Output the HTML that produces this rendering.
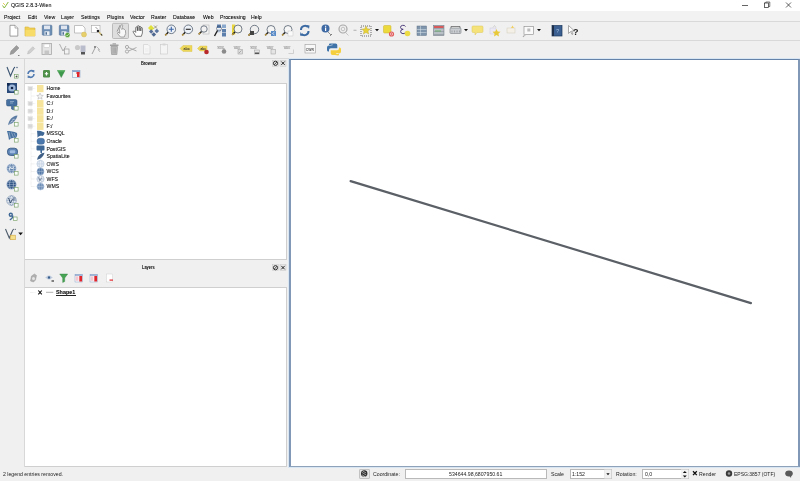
<!DOCTYPE html><html><head><meta charset="utf-8"><style>
*{margin:0;padding:0;box-sizing:border-box}
html,body{width:800px;height:481px;overflow:hidden;background:#f0f0f0;font-family:"Liberation Sans",sans-serif;font-size:5.2px;color:#1a1a1a}
.a{position:absolute}
.t{position:absolute;white-space:nowrap;line-height:1;-webkit-text-stroke:0.06px currentColor}
body{-webkit-font-smoothing:antialiased}
svg{position:absolute;left:0;top:0}
</style></head><body><div style="position:absolute;left:0;top:0;width:800px;height:481px;will-change:transform">
<div class="a" style="left:0px;top:0px;width:800px;height:11px;background:#ffffff;"></div>
<div class="a" style="left:0px;top:11px;width:800px;height:10px;background:#f2f2f2;"></div>
<div class="a" style="left:0px;top:21px;width:800px;height:1px;background:#d9d9d9;"></div>
<div class="a" style="left:0px;top:40px;width:800px;height:1px;background:#d9d9d9;"></div>
<div class="a" style="left:289px;top:59px;width:511px;height:408px;background:#fff;border:2px solid #8199b6;border-top:1.5px solid #6582a8;border-bottom:1.5px solid #8ea3ba;box-shadow:0 0 0 1px #d8e6f4"></div>
<div class="a" style="left:0px;top:58px;width:289px;height:1px;background:#d9d9d9;"></div>
<div class="a" style="left:24px;top:83px;width:263px;height:177px;background:#fff;border:1px solid #cfcfcf"></div>
<div class="a" style="left:24px;top:287px;width:263px;height:179.5px;background:#fff;border:1px solid #cfcfcf"></div>
<div class="a" style="left:24px;top:59px;width:1px;height:408px;background:#d8d8d8;"></div>
<div class="t" style="left:11px;top:3.4px;font-size:5.3px;color:#000;">QGIS 2.8.3-Wien</div>
<div class="t" style="left:4px;top:14.5px;font-size:5.2px;color:#000;">Project</div>
<div class="t" style="left:28px;top:14.5px;font-size:5.2px;color:#000;">Edit</div>
<div class="t" style="left:44px;top:14.5px;font-size:5.2px;color:#000;">View</div>
<div class="t" style="left:61px;top:14.5px;font-size:5.2px;color:#000;">Layer</div>
<div class="t" style="left:81px;top:14.5px;font-size:5.2px;color:#000;">Settings</div>
<div class="t" style="left:107px;top:14.5px;font-size:5.2px;color:#000;">Plugins</div>
<div class="t" style="left:130px;top:14.5px;font-size:5.2px;color:#000;">Vector</div>
<div class="t" style="left:151px;top:14.5px;font-size:5.2px;color:#000;">Raster</div>
<div class="t" style="left:173px;top:14.5px;font-size:5.2px;color:#000;">Database</div>
<div class="t" style="left:203px;top:14.5px;font-size:5.2px;color:#000;">Web</div>
<div class="t" style="left:220px;top:14.5px;font-size:5.2px;color:#000;">Processing</div>
<div class="t" style="left:251px;top:14.5px;font-size:5.2px;color:#000;">Help</div>
<div class="t" style="left:140.5px;top:61.6px;font-size:4.6px;color:#111;font-weight:bold;transform:scaleX(0.85);transform-origin:left">Browser</div>
<div class="t" style="left:142px;top:265.6px;font-size:4.6px;color:#111;font-weight:bold;transform:scaleX(0.85);transform-origin:left">Layers</div>
<div class="t" style="left:46.5px;top:86.2px;font-size:5.2px;color:#000;">Home</div>
<div class="t" style="left:46.5px;top:93.74000000000001px;font-size:5.2px;color:#000;">Favourites</div>
<div class="t" style="left:46.5px;top:101.28px;font-size:5.2px;color:#000;">C:/</div>
<div class="t" style="left:46.5px;top:108.82000000000001px;font-size:5.2px;color:#000;">D:/</div>
<div class="t" style="left:46.5px;top:116.36px;font-size:5.2px;color:#000;">E:/</div>
<div class="t" style="left:46.5px;top:123.9px;font-size:5.2px;color:#000;">F:/</div>
<div class="t" style="left:46.5px;top:131.44px;font-size:5.2px;color:#000;">MSSQL</div>
<div class="t" style="left:46.5px;top:138.98px;font-size:5.2px;color:#000;">Oracle</div>
<div class="t" style="left:46.5px;top:146.51999999999998px;font-size:5.2px;color:#000;">PostGIS</div>
<div class="t" style="left:46.5px;top:154.06px;font-size:5.2px;color:#000;">SpatiaLite</div>
<div class="t" style="left:46.5px;top:161.6px;font-size:5.2px;color:#000;">OWS</div>
<div class="t" style="left:46.5px;top:169.14px;font-size:5.2px;color:#000;">WCS</div>
<div class="t" style="left:46.5px;top:176.68px;font-size:5.2px;color:#000;">WFS</div>
<div class="t" style="left:46.5px;top:184.21999999999997px;font-size:5.2px;color:#000;">WMS</div>
<div class="t" style="left:56px;top:290px;font-size:5.4px;color:#000;font-weight:bold">Shape1</div>
<div class="a" style="left:56px;top:294.8px;width:19.8px;height:0.7px;background:#222;"></div>
<div class="t" style="left:3px;top:471.6px;font-size:5.2px;color:#222;-webkit-text-stroke:0">2 legend entries removed.</div>
<div class="a" style="left:405px;top:469px;width:142px;height:10px;background:#fff;border:1px solid #b9b9b9"></div>
<div class="a" style="left:570px;top:469px;width:42px;height:10px;background:#fff;border:1px solid #b9b9b9"></div>
<div class="a" style="left:642px;top:469px;width:47px;height:10px;background:#fff;border:1px solid #b9b9b9"></div>
<div class="a" style="left:359px;top:468.5px;width:10.5px;height:10px;background:#e6e6e6;border:1px solid #c2c2c2;border-radius:1px"></div>
<div class="t" style="left:373px;top:471.6px;font-size:5.2px;color:#222;-webkit-text-stroke:0">Coordinate:</div>
<div class="t" style="left:449px;top:471.6px;font-size:5.2px;color:#222;-webkit-text-stroke:0">534644.98,6807950.61</div>
<div class="t" style="left:551px;top:471.6px;font-size:5.2px;color:#222;-webkit-text-stroke:0">Scale</div>
<div class="t" style="left:572px;top:471.6px;font-size:5.2px;color:#222;-webkit-text-stroke:0">1:152</div>
<div class="t" style="left:616px;top:471.6px;font-size:5.2px;color:#222;-webkit-text-stroke:0">Rotation:</div>
<div class="t" style="left:645px;top:471.6px;font-size:5.2px;color:#222;-webkit-text-stroke:0">0,0</div>
<div class="t" style="left:699px;top:471.6px;font-size:5.2px;color:#222;-webkit-text-stroke:0">Render</div>
<div class="t" style="left:734px;top:471.6px;font-size:5.0px;color:#222;-webkit-text-stroke:0">EPSG:3857 (OTF)</div>
<svg width="800" height="481" viewBox="0 0 800 481"><line x1="350.6" y1="181.1" x2="750.9" y2="303.1" stroke="#5b6067" stroke-width="2.2" stroke-linecap="round"/><path d="M2.5,5.5 L4.3,8 L8.3,2" fill="none" stroke="#86b83e" stroke-width="1.0"/><path d="M3,3 L5,5" stroke="#e0c030" stroke-width="0.8"/><line x1="742" y1="5.5" x2="748" y2="5.5" stroke="#222" stroke-width="0.7"/><rect x="764.5" y="3" width="4" height="4.5" fill="none" stroke="#222" stroke-width="0.7"/><path d="M765.8,3 v-1 h4 v4.5 h-1" fill="none" stroke="#222" stroke-width="0.6"/><path d="M786,2.5 L791,7.5 M791,2.5 L786,7.5" stroke="#222" stroke-width="0.7"/><path d="M10,25.3 h5 l2.8,2.8 v8 h-7.8 z" fill="#fff" stroke="#8a8a8a" stroke-width="0.8"/><path d="M15,25.3 v2.8 h2.8" fill="#eee" stroke="#8a8a8a" stroke-width="0.6"/><path d="M25,27 h3.5 l1,1 h5.5 v8 h-10 z" fill="#f0cf55" stroke="#d9b43a" stroke-width="0.6"/><rect x="25.5" y="30" width="9.5" height="6" fill="#f7dc6a"/><rect x="42.3" y="25.2" width="9.6" height="10" rx="0.8" fill="#6e8fb5" stroke="#4f6e94" stroke-width="0.6"/><rect x="44" y="25.6" width="6" height="3.6" fill="#dfe6ef"/><rect x="44.5" y="31.3" width="5" height="3.9" fill="#e9eef4"/><rect x="45.5" y="32.2" width="1.5" height="2.5" fill="#4f6e94"/><rect x="59.3" y="25.2" width="9.6" height="10" rx="0.8" fill="#6e8fb5" stroke="#4f6e94" stroke-width="0.6"/><rect x="61" y="25.6" width="6" height="3.6" fill="#dfe6ef"/><rect x="61.5" y="31.3" width="5" height="3.9" fill="#e9eef4"/><rect x="62.5" y="32.2" width="1.5" height="2.5" fill="#4f6e94"/><circle cx="67.5" cy="35" r="2.6" fill="#5aa33c" stroke="#fff" stroke-width="0.5"/><path d="M66.3,35 l0.9,0.9 l1.6,-1.8" stroke="#fff" stroke-width="0.6" fill="none"/><path d="M74.5,25.5 h8 l2.5,2.5 v5 h-10.5 z" fill="#fff" stroke="#a9a9a9" stroke-width="0.7"/><circle cx="84" cy="34.5" r="2.5" fill="#e7d06c" stroke="#cfb24a" stroke-width="0.4"/><rect x="91.5" y="25.5" width="8.5" height="7" fill="#fff" stroke="#a5a5a5" stroke-width="0.6"/><path d="M95.5,27 l2,2" stroke="#555" stroke-width="0.6"/><circle cx="98" cy="31" r="1.3" fill="#222"/><path d="M99,32 l3,3.5" stroke="#c9b870" stroke-width="1.3"/><path d="M101,34 l1.2,1.5" stroke="#333" stroke-width="1.1"/><rect x="112.5" y="23.3" width="16" height="15.2" rx="1" fill="#dedede" stroke="#a8a8a8" stroke-width="0.7"/><path d="M120.5,37 l-3,-3.5 l0.5,-1.2 l1.8,1 l-0.3,-4 l1.8,-4.5 a0.8,0.8 0 0 1 1.4,0.6 l-1,4 l1.2,-0.8 l1.3,0.6 l1.2,1.2 l0.3,3 l-1.5,3.6 z" fill="#f7f7f7" stroke="#7d7d7d" stroke-width="0.65"/><path d="M117,31.5 l3.2,-6.5" stroke="#8a8a8a" stroke-width="0.8"/><path d="M135.8,36.3 l-2.6,-4.2 a0.8,0.8 0 0 1 1.3,-0.9 l1.2,1.2 v-4.6 a0.85,0.85 0 0 1 1.7,0 v3 v-4.3 a0.85,0.85 0 0 1 1.7,0 v4.3 v-3.6 a0.85,0.85 0 0 1 1.7,0 v3.8 v-2.6 a0.8,0.8 0 0 1 1.6,0 v4.6 l-1.1,3.3 z" fill="#fff" stroke="#2a2a2a" stroke-width="0.6"/><path d="M148,28 l3,-3 l3.2,3.2 l-3,3 z" fill="#dfe03a"/><path d="M154,25.5 l1.5,1.5 l1.5,-1.5 M154,28.5 l1.5,-1.5 l1.5,1.5" stroke="#6b6a3a" stroke-width="0.6" fill="none"/><path d="M149,31.5 l2.2,-2.2 l2.2,2.2 l-2.2,2.2 z" fill="#5a6f98"/><path d="M154.5,31 l2.3,-2.3 l2.3,2.3 l-2.3,2.3 z" fill="#5a74a0"/><path d="M151.5,34.5 l2.3,-2.3 l2.3,2.3 l-2.3,2.3 z" fill="#4f6890"/><line x1="168.29000000000002" y1="32.31" x2="165.29000000000002" y2="35.31" stroke="#1e1e1e" stroke-width="1.5"/><line x1="166.79000000000002" y1="33.81" x2="165.09000000000003" y2="35.510000000000005" stroke="#c8a040" stroke-width="1.1"/><circle cx="171.3" cy="29.3" r="4.3" fill="#eef3fa" stroke="#3d4a5c" stroke-width="0.7"/><path d="M168.8,29.3 h5 M171.3,26.8 v5" stroke="#3b64a4" stroke-width="1.1"/><line x1="185.29000000000002" y1="32.31" x2="182.29000000000002" y2="35.31" stroke="#1e1e1e" stroke-width="1.5"/><line x1="183.79000000000002" y1="33.81" x2="182.09000000000003" y2="35.510000000000005" stroke="#c8a040" stroke-width="1.1"/><circle cx="188.3" cy="29.3" r="4.3" fill="#eef3fa" stroke="#3d4a5c" stroke-width="0.7"/><path d="M185.8,29.3 h5" stroke="#333" stroke-width="1.2"/><rect x="203" y="25" width="6" height="9" fill="#f4f4f4" stroke="#b5b5b5" stroke-width="0.6"/><line x1="201.76" y1="31.24" x2="198.76" y2="34.239999999999995" stroke="#1e1e1e" stroke-width="1.5"/><line x1="200.26" y1="32.739999999999995" x2="198.56" y2="34.44" stroke="#c8a040" stroke-width="1.1"/><circle cx="204" cy="29" r="3.2" fill="#f2f2f2" stroke="#3d4a5c" stroke-width="0.7"/><rect x="217" y="24.5" width="4" height="3.5" fill="#5d7fab"/><rect x="222" y="24.5" width="4" height="3.5" fill="#8aa7cc"/><rect x="222" y="29" width="4" height="3.5" fill="#5d7fab"/><rect x="217" y="29" width="4" height="3.5" fill="#c8d6e8"/><rect x="222" y="33" width="4" height="3.5" fill="#5d7fab"/><circle cx="219" cy="28.5" r="2.5" fill="none" stroke="#2b3b55" stroke-width="0.5"/><line x1="217.5" y1="30.5" x2="214.5" y2="36" stroke="#1e1e1e" stroke-width="1.4"/><rect x="232" y="24.5" width="3.2" height="10" fill="#e8d63c"/><line x1="235.2" y1="31.8" x2="232.2" y2="34.8" stroke="#1e1e1e" stroke-width="1.5"/><line x1="233.7" y1="33.3" x2="232.0" y2="35.0" stroke="#c8a040" stroke-width="1.1"/><circle cx="238" cy="29" r="4" fill="#f5f5ee" stroke="#3d4a5c" stroke-width="0.7"/><line x1="251.56" y1="32.44" x2="248.56" y2="35.44" stroke="#1e1e1e" stroke-width="1.5"/><line x1="250.06" y1="33.94" x2="248.36" y2="35.64" stroke="#c8a040" stroke-width="1.1"/><circle cx="254.5" cy="29.5" r="4.2" fill="#efefef" stroke="#3d4a5c" stroke-width="0.7"/><rect x="250" y="31" width="4" height="4" fill="#444"/><line x1="268.2" y1="32.3" x2="265.2" y2="35.3" stroke="#1e1e1e" stroke-width="1.5"/><line x1="266.7" y1="33.8" x2="265.0" y2="35.5" stroke="#c8a040" stroke-width="1.1"/><circle cx="271" cy="29.5" r="4" fill="#f5f5f5" stroke="#3d4a5c" stroke-width="0.7"/><rect x="271" y="31" width="5" height="5" fill="#5b8cc7"/><path d="M274.5,32 l-2,1.5 l2,1.5" stroke="#fff" stroke-width="0.6" fill="none"/><line x1="285.2" y1="32.3" x2="282.2" y2="35.3" stroke="#1e1e1e" stroke-width="1.5"/><line x1="283.7" y1="33.8" x2="282.0" y2="35.5" stroke="#c8a040" stroke-width="1.1"/><circle cx="288" cy="29.5" r="4" fill="#f7f7f7" stroke="#3d4a5c" stroke-width="0.7"/><rect x="288" y="31" width="5" height="5" fill="#fafafa" stroke="#c5c5c5" stroke-width="0.5"/><path d="M301,30 a4,4 0 0 1 7,-2.8" fill="none" stroke="#3b6aa2" stroke-width="2"/><path d="M306.5,25 l3,0.5 l-0.5,3.5 z" fill="#3b6aa2"/><path d="M308.5,31 a4,4 0 0 1 -7,2.8" fill="none" stroke="#3b6aa2" stroke-width="2"/><path d="M303,36 l-3,-0.5 l0.5,-3.5 z" fill="#3b6aa2"/><circle cx="325.5" cy="28.5" r="4" fill="#3f6aa3"/><rect x="325" y="27.5" width="1.2" height="3.5" fill="#fff"/><rect x="325" y="25.8" width="1.2" height="1" fill="#fff"/><path d="M328,32 l3,3 l1,-1 M330,36 l2,-2" stroke="#777" stroke-width="0.8" fill="none"/><circle cx="343" cy="29" r="4" fill="none" stroke="#a8a8a8" stroke-width="1.2"/><circle cx="343" cy="29" r="1.8" fill="none" stroke="#b5b5b5" stroke-width="0.8"/><path d="M346,33 l2.5,2.5" stroke="#bbb" stroke-width="0.8"/><rect x="353.5" y="29.8" width="3" height="0.8" fill="#a0a0a0"/><path d="M361,26 h10 v10 h-10 z" fill="none" stroke="#333" stroke-width="0.7" stroke-dasharray="1,1"/><path d="M366,26 l1.3,2.8 l3,0.3 l-2.3,2 l0.7,3 l-2.7,-1.6 l-2.7,1.6 l0.7,-3 l-2.3,-2 l3,-0.3 z" fill="#e8d23a" stroke="#a28e1c" stroke-width="0.3"/><path d="M375,29 h4 l-2,2.2 z" fill="#111"/><rect x="383.5" y="25.5" width="7.5" height="7.5" rx="1" fill="#ecd93c" stroke="#c9b22a" stroke-width="0.5"/><circle cx="391.5" cy="34" r="2.6" fill="#e25b5b"/><circle cx="391.5" cy="34" r="1.2" fill="none" stroke="#fff" stroke-width="0.5"/><path d="M405.5,26.5 a2.6,2 0 1 0 -2.3,2.8 a2.6,2.2 0 1 0 2.6,2.6" fill="none" stroke="#4b3a7a" stroke-width="1"/><circle cx="407.5" cy="33.5" r="2.8" fill="#ecdb45"/><rect x="417" y="26" width="9.5" height="9.5" fill="#7f95ab" stroke="#607589" stroke-width="0.5"/><path d="M417,29.5 h9.5 M417,32.5 h9.5 M420.5,26 v9.5" stroke="#dfe6ee" stroke-width="0.5"/><rect x="433.5" y="25.5" width="10.5" height="10" fill="#9aa3ab" stroke="#6e7780" stroke-width="0.5"/><rect x="434" y="26" width="9.5" height="2" fill="#d65a5a"/><path d="M434,30 h9.5 M434,33 h9.5" stroke="#e8ecef" stroke-width="0.8"/><rect x="435" y="30.5" width="6" height="1" fill="#6cae6c"/><rect x="450" y="28" width="11" height="5.5" rx="1" fill="#c9cdd2" stroke="#777d85" stroke-width="0.6"/><path d="M451,28 v-1.5 h9 v1.5" stroke="#555" stroke-width="0.7" fill="none"/><path d="M452,30.5 v2 M454.5,30.5 v2 M457,30.5 v2 M459.5,30.5 v2" stroke="#666" stroke-width="0.4"/><path d="M464,29 h4 l-2,2.2 z" fill="#111"/><path d="M473,26 h9 a1,1 0 0 1 1,1 v4.5 a1,1 0 0 1 -1,1 h-5 l-2,2.5 v-2.5 h-2 a1,1 0 0 1 -1,-1 v-4.5 a1,1 0 0 1 1,-1 z" fill="#f5e37a" stroke="#dcc65a" stroke-width="0.5"/><rect x="490" y="28" width="6" height="6" fill="#ece9f5" stroke="#c5c2d5" stroke-width="0.4"/><path d="M495.5,26 l1.2,2.5 l2.8,0.3 l-2.1,1.9 l0.6,2.8 l-2.5,-1.4 l-2.5,1.4 l0.6,-2.8 l-2.1,-1.9 l2.8,-0.3 z" fill="#e8c93a" transform="translate(1,3)"/><path d="M493,27.5 l1.5,-2 l1.5,2" stroke="#aaa" stroke-width="0.4" fill="none"/><rect x="507" y="28" width="8" height="5" fill="#f4f0e8" stroke="#d2cbb8" stroke-width="0.5"/><path d="M511,28 l1.5,-2.5 l1.5,2.5" fill="#f0d060"/><rect x="524" y="26.5" width="9.5" height="8" fill="#fafafa" stroke="#888" stroke-width="0.6"/><path d="M524.5,34.5 l-1.5,2.5 l3,-2.5" fill="#fafafa" stroke="#888" stroke-width="0.5"/><rect x="527.3" y="28.5" width="3" height="3" fill="#bbb"/><path d="M537,29 h4 l-2,2.2 z" fill="#111"/><rect x="552" y="25.5" width="10" height="10.5" fill="#3a5f90" stroke="#1f3a5f" stroke-width="0.7"/><rect x="552" y="25.5" width="2" height="10.5" fill="#1e2f4a"/><text x="556.2" y="33" font-family="Liberation Sans" font-size="5" fill="#a9c6ea">?</text><path d="M568.5,25.5 v8 l2,-2 l1.5,3 l1,-0.5 l-1.5,-3 h3 z" fill="#fff" stroke="#777" stroke-width="0.6"/><text x="573" y="35" font-family="Liberation Sans" font-weight="bold" font-size="9" fill="#222">?</text><path d="M10,54.5 l1,-3.5 l5.5,-5.5 l2.5,2.5 l-5.5,5.5 z" fill="#9b9b9b" stroke="#7a7a7a" stroke-width="0.4"/><rect x="18" y="55" width="1.5" height="0.8" fill="#666"/><path d="M27.5,54 l0.8,-2.8 l4.5,-4.5 l1.9,1.9 l-4.5,4.5 z" fill="#cfcfcf" stroke="#aaa" stroke-width="0.4"/><rect x="42" y="43.5" width="9.5" height="11" fill="#e5e5e5" stroke="#a8a8a8" stroke-width="0.8"/><rect x="44" y="44" width="5.5" height="3.5" fill="#fff" stroke="#b3b3b3" stroke-width="0.4"/><rect x="44.5" y="50.5" width="4.5" height="4" fill="#c5c5c5"/><path d="M59.5,44 l3.5,7 l3,-5" fill="none" stroke="#9e9e9e" stroke-width="0.8"/><rect x="64.5" y="49" width="4.5" height="5" fill="#f3f3f3" stroke="#9a9a9a" stroke-width="0.7"/><circle cx="77.5" cy="47.5" r="2.6" fill="#c9c9c9"/><rect x="80.5" y="45.5" width="5" height="6.5" fill="#b9bccb"/><rect x="81" y="52" width="4" height="2.5" fill="#555"/><path d="M92,54 l3,-6" stroke="#8f8f8f" stroke-width="0.8"/><rect x="94" y="46" width="2" height="2" fill="#8f8f8f"/><path d="M96.5,46.5 l3,3 l-1,1 M98,49 l2,3" stroke="#a0a0a0" stroke-width="0.7" fill="none"/><rect x="110" y="44.5" width="8.5" height="1.5" fill="#a0a0a0"/><rect x="112.5" y="43.3" width="3.5" height="1.2" fill="#a0a0a0"/><path d="M111,46.5 h6.5 l-0.6,8 h-5.3 z" fill="#bdbdbd" stroke="#8e8e8e" stroke-width="0.6"/><path d="M113,47.5 v6 M114.25,47.5 v6 M115.5,47.5 v6" stroke="#8e8e8e" stroke-width="0.4"/><circle cx="127" cy="47" r="1.6" fill="none" stroke="#9a9a9a" stroke-width="0.8"/><circle cx="127" cy="51.5" r="1.6" fill="none" stroke="#9a9a9a" stroke-width="0.8"/><path d="M128.5,47.5 l8,3.5 M128.5,51 l8,-3.5" stroke="#9a9a9a" stroke-width="0.8"/><path d="M143.5,44.5 h4.5 l2,2 v7.5 h-6.5 z" fill="#f6f6f6" stroke="#cdcdcd" stroke-width="0.6"/><path d="M145,49 h3.5 M145,51 h3.5" stroke="#ddd" stroke-width="0.4"/><rect x="160.5" y="44.5" width="7" height="9.5" fill="#f4f4f4" stroke="#c8c8c8" stroke-width="0.6"/><rect x="162.5" y="43.5" width="3" height="2" fill="#d5d5d5"/><path d="M180,48.5 l3,-3 h9 v6 h-9 z" fill="#eed85a" stroke="#d4be40" stroke-width="0.4"/><text x="183.5" y="50.4" font-family="Liberation Sans" font-weight="bold" font-size="3.6" fill="#333">abc</text><path d="M197.5,48.5 l2.5,-2.5 h7 v5 h-7 z" fill="#eed85a" stroke="#d4be40" stroke-width="0.4"/><text x="200.5" y="50" font-family="Liberation Sans" font-weight="bold" font-size="3.2" fill="#333">abc</text><circle cx="206.5" cy="52" r="2.3" fill="#b8282a"/><text x="217.5" y="48.5" font-family="Liberation Sans" font-weight="bold" font-size="3.6" fill="#9a9a9a">abc</text><rect x="217.0" y="46.2" width="7" height="0.7" fill="#b0b0b0"/><circle cx="224" cy="51.5" r="2.3" fill="#8b8b8b"/><rect x="223.6" y="48" width="0.8" height="2" fill="#8b8b8b"/><text x="234" y="48.5" font-family="Liberation Sans" font-weight="bold" font-size="3.6" fill="#9a9a9a">abc</text><rect x="233.5" y="46.2" width="7" height="0.7" fill="#b0b0b0"/><rect x="238" y="49.5" width="4.5" height="4.5" fill="#dedede" stroke="#999" stroke-width="0.5"/><path d="M239,53 l2.5,-2.5" stroke="#777" stroke-width="0.5"/><text x="250.5" y="48.5" font-family="Liberation Sans" font-weight="bold" font-size="3.6" fill="#9a9a9a">abc</text><rect x="250.0" y="46.2" width="7" height="0.7" fill="#b0b0b0"/><rect x="254.5" y="50" width="5" height="4" fill="#e4e4e4" stroke="#999" stroke-width="0.5"/><rect x="255" y="52.5" width="4" height="1.5" fill="#555"/><text x="267" y="48.5" font-family="Liberation Sans" font-weight="bold" font-size="3.6" fill="#9a9a9a">abc</text><rect x="266.5" y="46.2" width="7" height="0.7" fill="#b0b0b0"/><rect x="271" y="49.5" width="4.5" height="4.5" fill="#e4e4e4" stroke="#9a9a9a" stroke-width="0.5"/><text x="284" y="48.5" font-family="Liberation Sans" font-weight="bold" font-size="3.6" fill="#9a9a9a">abc</text><rect x="283.5" y="46.2" width="7" height="0.7" fill="#b0b0b0"/><path d="M288.5,53.5 h5 v-4" fill="none" stroke="#b8b8b8" stroke-width="0.6"/><rect x="305" y="44.5" width="10.5" height="8.5" fill="#f8f8f8" stroke="#9d9d9d" stroke-width="0.6"/><text x="305.8" y="50.6" font-family="Liberation Sans" font-weight="bold" font-size="3.4" fill="#555">CWR</text><path d="M333,43.5 h2.5 a1.8,1.8 0 0 1 1.8,1.8 v3 h-6.5 a1.8,1.8 0 0 0 -1.8,1.8 v1.5 h-0.5 a1.5,1.5 0 0 1 -1.5,-1.5 v-2.5 a2,2 0 0 1 2,-2 h2.5 v-0.5 h-2.5 v-0.5 a1,1 0 0 1 1,-1 z" fill="#3d73a8"/><circle cx="332" cy="44.8" r="0.5" fill="#fff"/><path d="M335,55 h-2.5 a1.8,1.8 0 0 1 -1.8,-1.8 v-3 h6.5 a1.8,1.8 0 0 0 1.8,-1.8 v-1 h0.5 a1.5,1.5 0 0 1 1.5,1.5 v2.5 a2,2 0 0 1 -2,2 h-2.5 v0.5 h2.5 v0.5 a1,1 0 0 1 -1,1 z" fill="#f5cf3d"/><circle cx="337" cy="53.5" r="0.5" fill="#fff"/><path d="M7,67 l3.5,9 l3.5,-8" fill="none" stroke="#3c5572" stroke-width="1.1"/><circle cx="14.5" cy="67.5" r="0.7" fill="#3c5572"/><circle cx="17" cy="67.5" r="0.7" fill="#3c5572"/><rect x="14.5" y="74.5" width="3.6" height="3.6" fill="#fbfdfa" stroke="#6f9a5e" stroke-width="0.6"/><path d="M15.5,76.5 h2 M16.5,75.5 v2" stroke="#2a2a2a" stroke-width="0.6"/><rect x="7" y="83" width="10" height="10" fill="#2a4a7a"/><circle cx="12" cy="88" r="3.6" fill="#9db6d8"/><circle cx="12" cy="88" r="1.3" fill="#0f2447"/><rect x="7" y="83" width="2.5" height="2.5" fill="#10284f"/><rect x="14.5" y="90.5" width="2.5" height="2.5" fill="#10284f"/><rect x="14.5" y="90.5" width="3.6" height="3.6" fill="#fbfdfa" stroke="#6f9a5e" stroke-width="0.6"/><path d="M7.5,99.5 h8 a1.5,1.5 0 0 1 1.5,1.5 v3.5 a1.5,1.5 0 0 1 -1.5,1.5 h-2 v4 l-2,-1 v-3 h-3.5 a1.5,1.5 0 0 1 -1.5,-1.5 v-3 a1.5,1.5 0 0 1 1,-2 z" fill="#46709f" stroke="#2d4f78" stroke-width="0.5"/><path d="M10,101.5 h4 M10,103 h3" stroke="#c5d5ea" stroke-width="0.5"/><rect x="14.5" y="106.5" width="3.6" height="3.6" fill="#fbfdfa" stroke="#6f9a5e" stroke-width="0.6"/><path d="M8,125 c1,-5 4,-9 9.5,-9.5 c-1,4 -4,8 -9.5,9.5 z" fill="#5d7ca3"/><path d="M8,126 l6,-7.5 M11,121.5 l3,0.5 M12.5,119.5 l3,0.3" stroke="#dfe7f1" stroke-width="0.45"/><rect x="14.5" y="122.5" width="3.6" height="3.6" fill="#fbfdfa" stroke="#6f9a5e" stroke-width="0.6"/><path d="M7,131 c3,0 7,0.5 10,2 c0.5,2.5 0,4 -1.5,5 c-2,-0.5 -4.5,0 -6.5,2 c-0.5,-3 -1,-6 -2,-9 z" fill="#46709f"/><path d="M9,132 l1.5,6.5 M11.5,132.5 l2,5 M14,133 l1.5,3.5" stroke="#d5e0ee" stroke-width="0.45"/><rect x="14.5" y="138.5" width="3.6" height="3.6" fill="#fbfdfa" stroke="#6f9a5e" stroke-width="0.6"/><rect x="7.5" y="148.2" width="10" height="7.2" rx="3" fill="#5f86b6" stroke="#2b4e7a" stroke-width="0.8"/><rect x="9.8" y="150.3" width="5.4" height="3" rx="1" fill="#9fbbe0"/><rect x="14.5" y="154.5" width="3.6" height="3.6" fill="#fbfdfa" stroke="#6f9a5e" stroke-width="0.6"/><circle cx="11.5" cy="168.5" r="4.8" fill="#6384ad" stroke="#e3eaf3" stroke-width="0.6"/><ellipse cx="11.5" cy="168.5" rx="2" ry="4.8" fill="none" stroke="#e3eaf3" stroke-width="0.5"/><path d="M6.7,168.5 h9.6 M7.5,166.3 h8 M7.5,170.7 h8" stroke="#e3eaf3" stroke-width="0.4"/><path d="M9,170 l1.5,-3 l1.5,2 l2,-2.5" stroke="#fff" stroke-width="0.7" fill="none"/><rect x="14.5" y="171.5" width="3.6" height="3.6" fill="#fbfdfa" stroke="#6f9a5e" stroke-width="0.6"/><circle cx="11.5" cy="184.5" r="4.8" fill="#2f5485" stroke="#c9d7e8" stroke-width="0.6"/><ellipse cx="11.5" cy="184.5" rx="2" ry="4.8" fill="none" stroke="#c9d7e8" stroke-width="0.5"/><path d="M6.7,184.5 h9.6 M7.5,182.3 h8 M7.5,186.7 h8" stroke="#c9d7e8" stroke-width="0.4"/><rect x="14.5" y="187.5" width="3.6" height="3.6" fill="#fbfdfa" stroke="#6f9a5e" stroke-width="0.6"/><circle cx="11.5" cy="200.5" r="4.8" fill="#e6ecf3" stroke="#6f87a8" stroke-width="0.6"/><ellipse cx="11.5" cy="200.5" rx="2" ry="4.8" fill="none" stroke="#6f87a8" stroke-width="0.5"/><path d="M6.7,200.5 h9.6 M7.5,198.3 h8 M7.5,202.7 h8" stroke="#6f87a8" stroke-width="0.4"/><path d="M8.5,198 l2,5 l2,-4" stroke="#2c4565" stroke-width="0.9" fill="none"/><path d="M13,198 h2.5 M13,199.8 h2.5" stroke="#2c4565" stroke-width="0.6"/><rect x="14.5" y="203.5" width="3.6" height="3.6" fill="#fbfdfa" stroke="#6f9a5e" stroke-width="0.6"/><circle cx="10.8" cy="214.8" r="2.2" fill="#3f6896"/><circle cx="10.8" cy="214.8" r="0.8" fill="#f0f0f0"/><path d="M12.8,215.5 c0,2 -1,3.5 -3,4.3" fill="none" stroke="#3f6896" stroke-width="1.3"/><rect x="13.5" y="217" width="3.6" height="3.6" fill="#fbfdfa" stroke="#6f9a5e" stroke-width="0.6"/><path d="M5.5,229 l3.8,9 l3.6,-8.2" fill="none" stroke="#4f5d6b" stroke-width="1.1"/><circle cx="13.5" cy="229.3" r="0.65" fill="#4f5d6b"/><circle cx="15.3" cy="229.3" r="0.65" fill="#4f5d6b"/><rect x="10.5" y="235.2" width="4.8" height="4.5" fill="#f6e08a" stroke="#d3a640" stroke-width="0.6"/><path d="M18.3,232.6 h4.6 l-2.3,2.6 z" fill="#111"/><path d="M28,74 a3.2,3.2 0 0 1 5.5,-2.3" fill="none" stroke="#4f79b0" stroke-width="1.6"/><path d="M32,70 l2.5,0.3 l-0.4,2.8 z" fill="#4f79b0"/><path d="M34,74 a3.2,3.2 0 0 1 -5.5,2.3" fill="none" stroke="#4f79b0" stroke-width="1.6"/><path d="M30,78 l-2.5,-0.3 l0.4,-2.8 z" fill="#4f79b0"/><rect x="43" y="70" width="7" height="7.5" rx="1.2" fill="#4e8f4a"/><path d="M44.8,73.75 h3.4 M46.5,72 v3.5" stroke="#fff" stroke-width="1.2"/><path d="M57.5,70.5 h7.5 l-3.75,7 z" fill="#3c9a4a" stroke="#2d7a38" stroke-width="0.4"/><rect x="57.5" y="70" width="7.5" height="1.4" fill="#68b870"/><rect x="72.5" y="70.5" width="7.5" height="7" fill="#f5f5f5" stroke="#8ba3c9" stroke-width="0.6"/><rect x="72.5" y="70.5" width="7.5" height="1.4" fill="#7f9bc8"/><rect x="77" y="72" width="2.5" height="5" fill="#e0262c"/><rect x="76" y="72.5" width="3.5" height="1" fill="#e0262c"/><rect x="272.5" y="60.2" width="6" height="6" fill="#e6e6e6" stroke="#bdbdbd" stroke-width="0.4"/><circle cx="275.5" cy="63.300000000000004" r="2.1" fill="none" stroke="#222" stroke-width="0.9"/><path d="M274.3,64.7 l2.6,-2.8" stroke="#222" stroke-width="0.8"/><rect x="280" y="60.2" width="6" height="6" fill="#e6e6e6" stroke="#bdbdbd" stroke-width="0.4"/><path d="M281.3,61.5 l3.4,3.4 M284.7,61.5 l-3.4,3.4" stroke="#111" stroke-width="0.9"/><rect x="272.5" y="264.6" width="6" height="6" fill="#e6e6e6" stroke="#bdbdbd" stroke-width="0.4"/><circle cx="275.5" cy="267.70000000000005" r="2.1" fill="none" stroke="#222" stroke-width="0.9"/><path d="M274.3,269.1 l2.6,-2.8" stroke="#222" stroke-width="0.8"/><rect x="280" y="264.6" width="6" height="6" fill="#e6e6e6" stroke="#bdbdbd" stroke-width="0.4"/><path d="M281.3,265.90000000000003 l3.4,3.4 M284.7,265.90000000000003 l-3.4,3.4" stroke="#111" stroke-width="0.9"/><line x1="31" y1="88.5" x2="31" y2="186.51999999999998" stroke="#cfcfcf" stroke-width="0.5" stroke-dasharray="0.6,0.6"/><line x1="31" y1="88.5" x2="35.5" y2="88.5" stroke="#cfcfcf" stroke-width="0.5" stroke-dasharray="0.6,0.6"/><line x1="31" y1="96.04" x2="35.5" y2="96.04" stroke="#cfcfcf" stroke-width="0.5" stroke-dasharray="0.6,0.6"/><line x1="31" y1="103.58" x2="35.5" y2="103.58" stroke="#cfcfcf" stroke-width="0.5" stroke-dasharray="0.6,0.6"/><line x1="31" y1="111.12" x2="35.5" y2="111.12" stroke="#cfcfcf" stroke-width="0.5" stroke-dasharray="0.6,0.6"/><line x1="31" y1="118.66" x2="35.5" y2="118.66" stroke="#cfcfcf" stroke-width="0.5" stroke-dasharray="0.6,0.6"/><line x1="31" y1="126.2" x2="35.5" y2="126.2" stroke="#cfcfcf" stroke-width="0.5" stroke-dasharray="0.6,0.6"/><line x1="31" y1="133.74" x2="35.5" y2="133.74" stroke="#cfcfcf" stroke-width="0.5" stroke-dasharray="0.6,0.6"/><line x1="31" y1="141.28" x2="35.5" y2="141.28" stroke="#cfcfcf" stroke-width="0.5" stroke-dasharray="0.6,0.6"/><line x1="31" y1="148.82" x2="35.5" y2="148.82" stroke="#cfcfcf" stroke-width="0.5" stroke-dasharray="0.6,0.6"/><line x1="31" y1="156.36" x2="35.5" y2="156.36" stroke="#cfcfcf" stroke-width="0.5" stroke-dasharray="0.6,0.6"/><line x1="31" y1="163.9" x2="35.5" y2="163.9" stroke="#cfcfcf" stroke-width="0.5" stroke-dasharray="0.6,0.6"/><line x1="31" y1="171.44" x2="35.5" y2="171.44" stroke="#cfcfcf" stroke-width="0.5" stroke-dasharray="0.6,0.6"/><line x1="31" y1="178.98000000000002" x2="35.5" y2="178.98000000000002" stroke="#cfcfcf" stroke-width="0.5" stroke-dasharray="0.6,0.6"/><line x1="31" y1="186.51999999999998" x2="35.5" y2="186.51999999999998" stroke="#cfcfcf" stroke-width="0.5" stroke-dasharray="0.6,0.6"/><rect x="28" y="86.5" width="4.5" height="4" fill="#f2f2f2" stroke="#d2d2d2" stroke-width="0.4"/><path d="M28.5,87.5 h3.5 M28.5,88.5 h3.5 M28.5,89.5 h3.5" stroke="#b0b0b0" stroke-width="0.45"/><rect x="28" y="101.58" width="4.5" height="4" fill="#f2f2f2" stroke="#d2d2d2" stroke-width="0.4"/><path d="M28.5,102.58 h3.5 M28.5,103.58 h3.5 M28.5,104.58 h3.5" stroke="#b0b0b0" stroke-width="0.45"/><rect x="28" y="109.12" width="4.5" height="4" fill="#f2f2f2" stroke="#d2d2d2" stroke-width="0.4"/><path d="M28.5,110.12 h3.5 M28.5,111.12 h3.5 M28.5,112.12 h3.5" stroke="#b0b0b0" stroke-width="0.45"/><rect x="28" y="116.66" width="4.5" height="4" fill="#f2f2f2" stroke="#d2d2d2" stroke-width="0.4"/><path d="M28.5,117.66 h3.5 M28.5,118.66 h3.5 M28.5,119.66 h3.5" stroke="#b0b0b0" stroke-width="0.45"/><rect x="28" y="124.2" width="4.5" height="4" fill="#f2f2f2" stroke="#d2d2d2" stroke-width="0.4"/><path d="M28.5,125.2 h3.5 M28.5,126.2 h3.5 M28.5,127.2 h3.5" stroke="#b0b0b0" stroke-width="0.45"/><rect x="37" y="85.0" width="6.5" height="7.2" fill="#f6e39c"/><rect x="37" y="100.08" width="6.5" height="7.2" fill="#f6e39c"/><rect x="37" y="107.62" width="6.5" height="7.2" fill="#f6e39c"/><rect x="37" y="115.16" width="6.5" height="7.2" fill="#f6e39c"/><rect x="37" y="122.7" width="6.5" height="7.2" fill="#f6e39c"/><path d="M40,93.04 l1,2.2 l2.3,0.2 l-1.8,1.5 l0.6,2.3 l-2.1,-1.3 l-2.1,1.3 l0.6,-2.3 l-1.8,-1.5 l2.3,-0.2 z" fill="#f3f3f3" stroke="#9a9a9a" stroke-width="0.4"/><path d="M37,130.74 c2.5,0 5,0.3 7.5,1.8 c0,2 -1,2.8 -2,3.5 c-1.8,-0.5 -3.5,0 -5,1.8 c0,-2.5 -0.3,-5 -0.5,-7 z" fill="#3f6896"/><rect x="37" y="138.28" width="7.5" height="6" rx="2.5" fill="#4a78ad" stroke="#2f5585" stroke-width="0.4"/><path d="M37.5,145.62 h6 a1,1 0 0 1 1,1 v3 a1,1 0 0 1 -1,1 h-1.5 v3 l-1.6,-0.8 v-2.2 h-2.9 a1,1 0 0 1 -1,-1 v-3 a1,1 0 0 1 1,-1 z" fill="#3f6896"/><path d="M37,159.86 c0.8,-3.8 3,-6.5 7.5,-7 c-0.8,3 -3,6 -7.5,7 z" fill="#3f5f86"/><circle cx="40.5" cy="163.9" r="3.6" fill="#e9eef5" stroke="#a9bcd3" stroke-width="0.5"/><ellipse cx="40.5" cy="163.9" rx="1.5" ry="3.6" fill="none" stroke="#a9bcd3" stroke-width="0.4"/><path d="M36.9,163.9 h7.2" stroke="#a9bcd3" stroke-width="0.4"/><circle cx="40.5" cy="171.44" r="3.6" fill="#5076a6" stroke="#c9d6e6" stroke-width="0.5"/><ellipse cx="40.5" cy="171.44" rx="1.5" ry="3.6" fill="none" stroke="#c9d6e6" stroke-width="0.4"/><path d="M36.9,171.44 h7.2" stroke="#c9d6e6" stroke-width="0.4"/><circle cx="40.5" cy="178.98000000000002" r="3.6" fill="#eef2f7" stroke="#8fa5c2" stroke-width="0.5"/><ellipse cx="40.5" cy="178.98000000000002" rx="1.5" ry="3.6" fill="none" stroke="#8fa5c2" stroke-width="0.4"/><path d="M36.9,178.98000000000002 h7.2" stroke="#8fa5c2" stroke-width="0.4"/><path d="M38.5,177.18 l1.5,3.6 l1.5,-3" stroke="#3c5572" stroke-width="0.6" fill="none"/><circle cx="40.5" cy="186.51999999999998" r="3.6" fill="#6f8fb8" stroke="#c9d6e6" stroke-width="0.5"/><ellipse cx="40.5" cy="186.51999999999998" rx="1.5" ry="3.6" fill="none" stroke="#c9d6e6" stroke-width="0.4"/><path d="M36.9,186.51999999999998 h7.2" stroke="#c9d6e6" stroke-width="0.4"/><path d="M30.5,281 l1,-5 l3,-2 l2,1.5 l-1,4.5 l-2,2 z" fill="#b0b0b0" stroke="#8a8a8a" stroke-width="0.4"/><circle cx="33.5" cy="278.5" r="1.5" fill="#e5e5e5"/><path d="M46,277.5 c1.5,-2 4.5,-2 6,0 c-1.5,2 -4.5,2 -6,0 z" fill="#cfd9e6" stroke="#7f99bf" stroke-width="0.4"/><circle cx="49" cy="277.5" r="1.2" fill="#3a5f8e"/><rect x="51.5" y="280.5" width="2.5" height="1" fill="#111"/><path d="M59.7,274 h8 l-3,4 v3.5 l-2,1 v-4.5 z" fill="#47a455" stroke="#2f7f3b" stroke-width="0.4"/><rect x="75" y="274.5" width="7.5" height="7.5" fill="#fafafa" stroke="#8ba3c9" stroke-width="0.5"/><rect x="75" y="274.5" width="7.5" height="1.2" fill="#7f9bc8"/><rect x="79.3" y="276" width="2.8" height="5.5" fill="#e0262c"/><rect x="75.6" y="276.3" width="2.8" height="4.5" fill="#f5c7d0"/><rect x="90" y="274.5" width="7.5" height="7.5" fill="#fafafa" stroke="#8ba3c9" stroke-width="0.5"/><rect x="90" y="274.5" width="7.5" height="1.2" fill="#7f9bc8"/><rect x="94.3" y="276" width="2.8" height="5.5" fill="#e0262c"/><rect x="90.6" y="276.3" width="2.8" height="4.5" fill="#f5c7d0"/><rect x="106.5" y="274" width="6" height="8" fill="#fff" stroke="#cfcfcf" stroke-width="0.5"/><rect x="109.5" y="279.5" width="3.5" height="1.2" fill="#e0262c"/><line x1="30" y1="292.5" x2="36" y2="292.5" stroke="#cfcfcf" stroke-width="0.5" stroke-dasharray="0.6,0.6"/><path d="M38.3,290.5 l3.5,3.8 M41.8,290.5 l-3.5,3.8" stroke="#111" stroke-width="1.1"/><line x1="46" y1="292.3" x2="53.3" y2="292.3" stroke="#9c9c9c" stroke-width="0.8"/><circle cx="364.2" cy="473.4" r="3.2" fill="#2a2a2a"/><path d="M361.8,472.3 l4.5,2.8 M362.5,470.8 l3.6,2.2 M362,474.8 l3,1.8" stroke="#e8e8e8" stroke-width="0.6"/><path d="M606.5,473 h3.5 l-1.75,2 z" fill="#111"/><rect x="604.5" y="469.5" width="7" height="9" fill="#f0f0f0" stroke="#d0d0d0" stroke-width="0.3"/><path d="M606.3,473.2 h3.4 l-1.7,2 z" fill="#111"/><rect x="681" y="469.5" width="7.5" height="9" fill="#f3f3f3"/><path d="M682.8,473 l2,-2 l2,2 z M682.8,475.5 l2,2 l2,-2 z" fill="#111"/><path d="M693,471.3 l3.8,3.8 M696.8,471.3 l-3.8,3.8" stroke="#111" stroke-width="1.3"/><circle cx="729" cy="473.5" r="3.2" fill="#3a3a3a"/><circle cx="729" cy="473.5" r="1.3" fill="#9a9a9a"/><ellipse cx="789" cy="473.6" rx="3.8" ry="3" fill="#5a5a5a"/><path d="M789.5,476 l1.5,2 l0.3,-2.5 z" fill="#5a5a5a"/></svg>
</div></body></html>
